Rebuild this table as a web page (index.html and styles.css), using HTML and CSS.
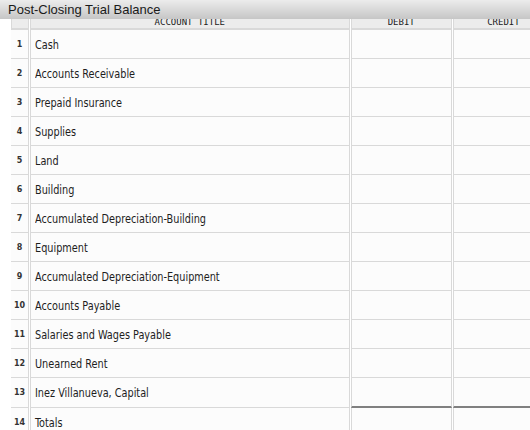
FILE: index.html
```html
<!DOCTYPE html>
<html>
<head>
<meta charset="utf-8">
<link rel="stylesheet" href="styles.css">
</head>
<body>
<div class="titlebar">Post-Closing Trial Balance</div>
<table class="tb">
  <thead>
    <tr>
      <th class="num"></th>
      <th class="acct">ACCOUNT TITLE</th>
      <th class="amt">DEBIT</th>
      <th class="amt">CREDIT</th>
    </tr>
  </thead>
  <tbody>
    <tr><td class="num">1</td><td class="acct"><span class="lbl">Cash</span></td><td class="amt"></td><td class="amt"></td></tr>
    <tr><td class="num">2</td><td class="acct"><span class="lbl">Accounts Receivable</span></td><td class="amt"></td><td class="amt"></td></tr>
    <tr><td class="num">3</td><td class="acct"><span class="lbl">Prepaid Insurance</span></td><td class="amt"></td><td class="amt"></td></tr>
    <tr><td class="num">4</td><td class="acct"><span class="lbl">Supplies</span></td><td class="amt"></td><td class="amt"></td></tr>
    <tr><td class="num">5</td><td class="acct"><span class="lbl">Land</span></td><td class="amt"></td><td class="amt"></td></tr>
    <tr><td class="num">6</td><td class="acct"><span class="lbl">Building</span></td><td class="amt"></td><td class="amt"></td></tr>
    <tr><td class="num">7</td><td class="acct"><span class="lbl">Accumulated Depreciation-Building</span></td><td class="amt"></td><td class="amt"></td></tr>
    <tr><td class="num">8</td><td class="acct"><span class="lbl">Equipment</span></td><td class="amt"></td><td class="amt"></td></tr>
    <tr><td class="num">9</td><td class="acct"><span class="lbl">Accumulated Depreciation-Equipment</span></td><td class="amt"></td><td class="amt"></td></tr>
    <tr><td class="num">10</td><td class="acct"><span class="lbl">Accounts Payable</span></td><td class="amt"></td><td class="amt"></td></tr>
    <tr><td class="num">11</td><td class="acct"><span class="lbl">Salaries and Wages Payable</span></td><td class="amt"></td><td class="amt"></td></tr>
    <tr><td class="num">12</td><td class="acct"><span class="lbl">Unearned Rent</span></td><td class="amt"></td><td class="amt"></td></tr>
    <tr class="last"><td class="num">13</td><td class="acct"><span class="lbl">Inez Villanueva, Capital</span></td><td class="amt"></td><td class="amt"></td></tr>
    <tr><td class="num">14</td><td class="acct"><span class="lbl">Totals</span></td><td class="amt"></td><td class="amt"></td></tr>
  </tbody>
</table>
</body>
</html>
```
FILE: styles.css
```css
html, body {
  margin: 0;
  padding: 0;
  background: #fff;
  overflow: hidden;
  width: 530px;
  height: 430px;
}
.titlebar {
  position: relative;
  z-index: 2;
  height: 19px;
  line-height: 19px;
  padding-left: 8px;
  font-family: "Liberation Sans", Arial, sans-serif;
  font-size: 13px;
  color: #1a1a1a;
  background: linear-gradient(#ececec, #c6c6c6);
}
.tb {
  margin-top: -6px;
  margin-left: 10px;
  border-collapse: separate;
  border-spacing: 1px 0;
  table-layout: fixed;
  width: 545px;
  position: relative;
  z-index: 1;
}
.tb th {
  height: 15px;
  padding: 0;
  background: #ececec;
  font-family: "DejaVu Sans Mono", monospace;
  font-size: 9px;
  font-weight: normal;
  color: #222;
  text-align: center;
  vertical-align: bottom;
  line-height: 11px;
  border-left: 1px solid #d9d9d9;
  border-right: 1px solid #d9d9d9;
  border-bottom: 2px solid #d9d9d9;
}
.tb td {
  height: 28px;
  padding: 0;
  background: #fcfcfc;
  border-left: 1px solid #d9d9d9;
  border-right: 1px solid #d9d9d9;
  border-bottom: 1px solid #d9d9d9;
  font-family: "DejaVu Sans Condensed", sans-serif;
  font-size: 13px;
  color: #1e1e1e;
  vertical-align: middle;
  white-space: nowrap;
}
.tb th.num { width: 16px; }
.tb td.num {
  border-left: none;
  text-align: center;
  font-family: "DejaVu Sans", sans-serif;
  font-size: 8px;
  font-weight: bold;
  color: #333;
}
.tb .acct { width: 317px; }
.tb td.acct { padding-left: 4px; }
.lbl {
  display: inline-block;
  transform: scaleX(0.83);
  transform-origin: left center;
}
.tb .amt { width: 99px; }
.tb tr.last td.amt { border-bottom: 2px solid #808080; }
```
